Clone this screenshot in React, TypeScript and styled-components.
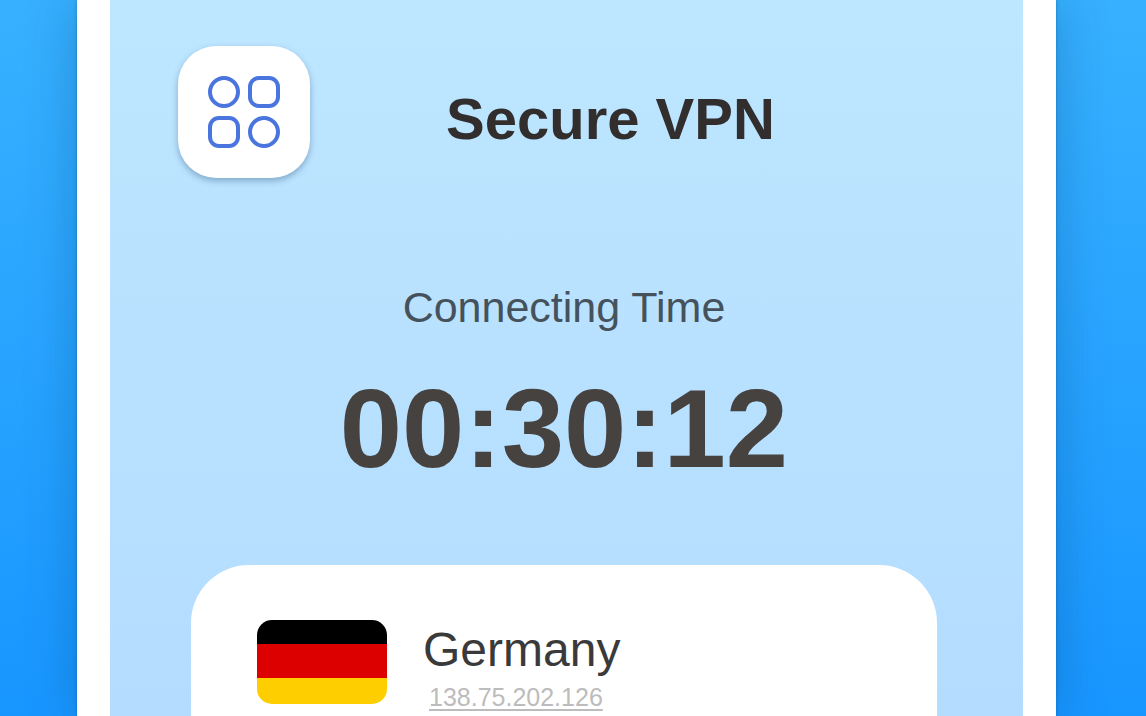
import React from "react";
import styled, { createGlobalStyle } from "styled-components";

const GlobalStyle = createGlobalStyle`
  * {
    box-sizing: border-box;
  }
  body {
    margin: 0;
    font-family: "Liberation Sans", Arial, Helvetica, sans-serif;
  }
`;

const Page = styled.div`
  display: flex;
  min-height: 100vh;
  padding: 0 90px 0 77px;
  overflow: hidden;
  background: linear-gradient(180deg, #37b1ff 0%, #1896ff 100%);
`;

const Device = styled.div`
  flex: 1;
  display: flex;
  padding: 0 33px;
  background: #ffffff;
  box-shadow: 0 0 3px rgba(0, 70, 130, 0.4), 0 0 48px rgba(0, 60, 110, 0.3);
`;

const Screen = styled.main`
  flex: 1;
  display: flex;
  flex-direction: column;
  background: linear-gradient(180deg, #bde6ff 0%, #b4dcff 100%);
`;

const Header = styled.header`
  display: flex;
  align-items: center;
  gap: 136px;
  padding: 46px 68px 0;
`;

const MenuButton = styled.button`
  display: flex;
  align-items: center;
  justify-content: center;
  width: 132px;
  height: 132px;
  padding: 0;
  border: 0;
  border-radius: 38px;
  background: #ffffff;
  box-shadow: 0 3px 6px rgba(60, 100, 140, 0.45);
`;

const Title = styled.h1`
  margin: 0;
  padding-top: 14px;
  color: #332e2e;
  font-size: 58px;
  line-height: 60px;
  font-weight: 700;
  white-space: nowrap;
`;

const Body = styled.section`
  flex: 1;
  display: flex;
  flex-direction: column;
  padding: 105px 86px 0 81px;
`;

const TimerLabel = styled.p`
  margin: 0;
  color: #45525c;
  font-size: 43px;
  line-height: 48px;
  text-align: center;
`;

const Timer = styled.time`
  margin-top: 34px;
  color: #46423f;
  font-size: 112px;
  line-height: 128px;
  font-weight: 700;
  text-align: center;
`;

const ServerCard = styled.article`
  flex: 1;
  display: flex;
  align-items: flex-start;
  gap: 36px;
  margin-top: 72px;
  padding: 55px 66px 0;
  border-radius: 58px 58px 0 0;
  background: #ffffff;
`;

const FlagImage = styled.svg`
  display: block;
  flex: none;
`;

const ServerInfo = styled.div`
  display: flex;
  flex-direction: column;
  align-items: flex-start;
`;

const Country = styled.h2`
  margin: 0;
  color: #3a3a3a;
  font-size: 48px;
  line-height: 60px;
  font-weight: 400;
`;

const Address = styled.a`
  margin-left: 6px;
  color: #bcbcbc;
  font-size: 25px;
  line-height: 34px;
  text-decoration: underline;
  text-decoration-thickness: 2px;
  text-underline-offset: 3px;
`;

const GridIcon = () => (
  <svg width="74" height="74" viewBox="0 0 74 74" fill="none" stroke="#4a74de" strokeWidth="4" aria-hidden="true">
    <circle cx="17" cy="17" r="14" />
    <rect x="43" y="3" width="28" height="28" rx="9" />
    <rect x="3" y="43" width="28" height="28" rx="9" />
    <circle cx="57" cy="57" r="14" />
  </svg>
);

const GermanFlag = () => (
  <FlagImage width="130" height="84" viewBox="0 0 130 84" role="img" aria-label="Flag of Germany">
    <clipPath id="flag-shape">
      <rect width="130" height="84" rx="15" />
    </clipPath>
    <g clipPath="url(#flag-shape)">
      <rect width="130" height="25" fill="#000000" />
      <rect y="24" width="130" height="35" fill="#dc0000" />
      <rect y="58" width="130" height="26" fill="#ffce00" />
    </g>
  </FlagImage>
);

export default function App() {
  return (
    <>
      <GlobalStyle />
      <Page>
        <Device>
          <Screen>
            <Header>
              <MenuButton type="button" aria-label="Menu">
                <GridIcon />
              </MenuButton>
              <Title>Secure VPN</Title>
            </Header>
            <Body>
              <TimerLabel>Connecting Time</TimerLabel>
              <Timer>00:30:12</Timer>
              <ServerCard>
                <GermanFlag />
                <ServerInfo>
                  <Country>Germany</Country>
                  <Address href="#server">138.75.202.126</Address>
                </ServerInfo>
              </ServerCard>
            </Body>
          </Screen>
        </Device>
      </Page>
    </>
  );
}
